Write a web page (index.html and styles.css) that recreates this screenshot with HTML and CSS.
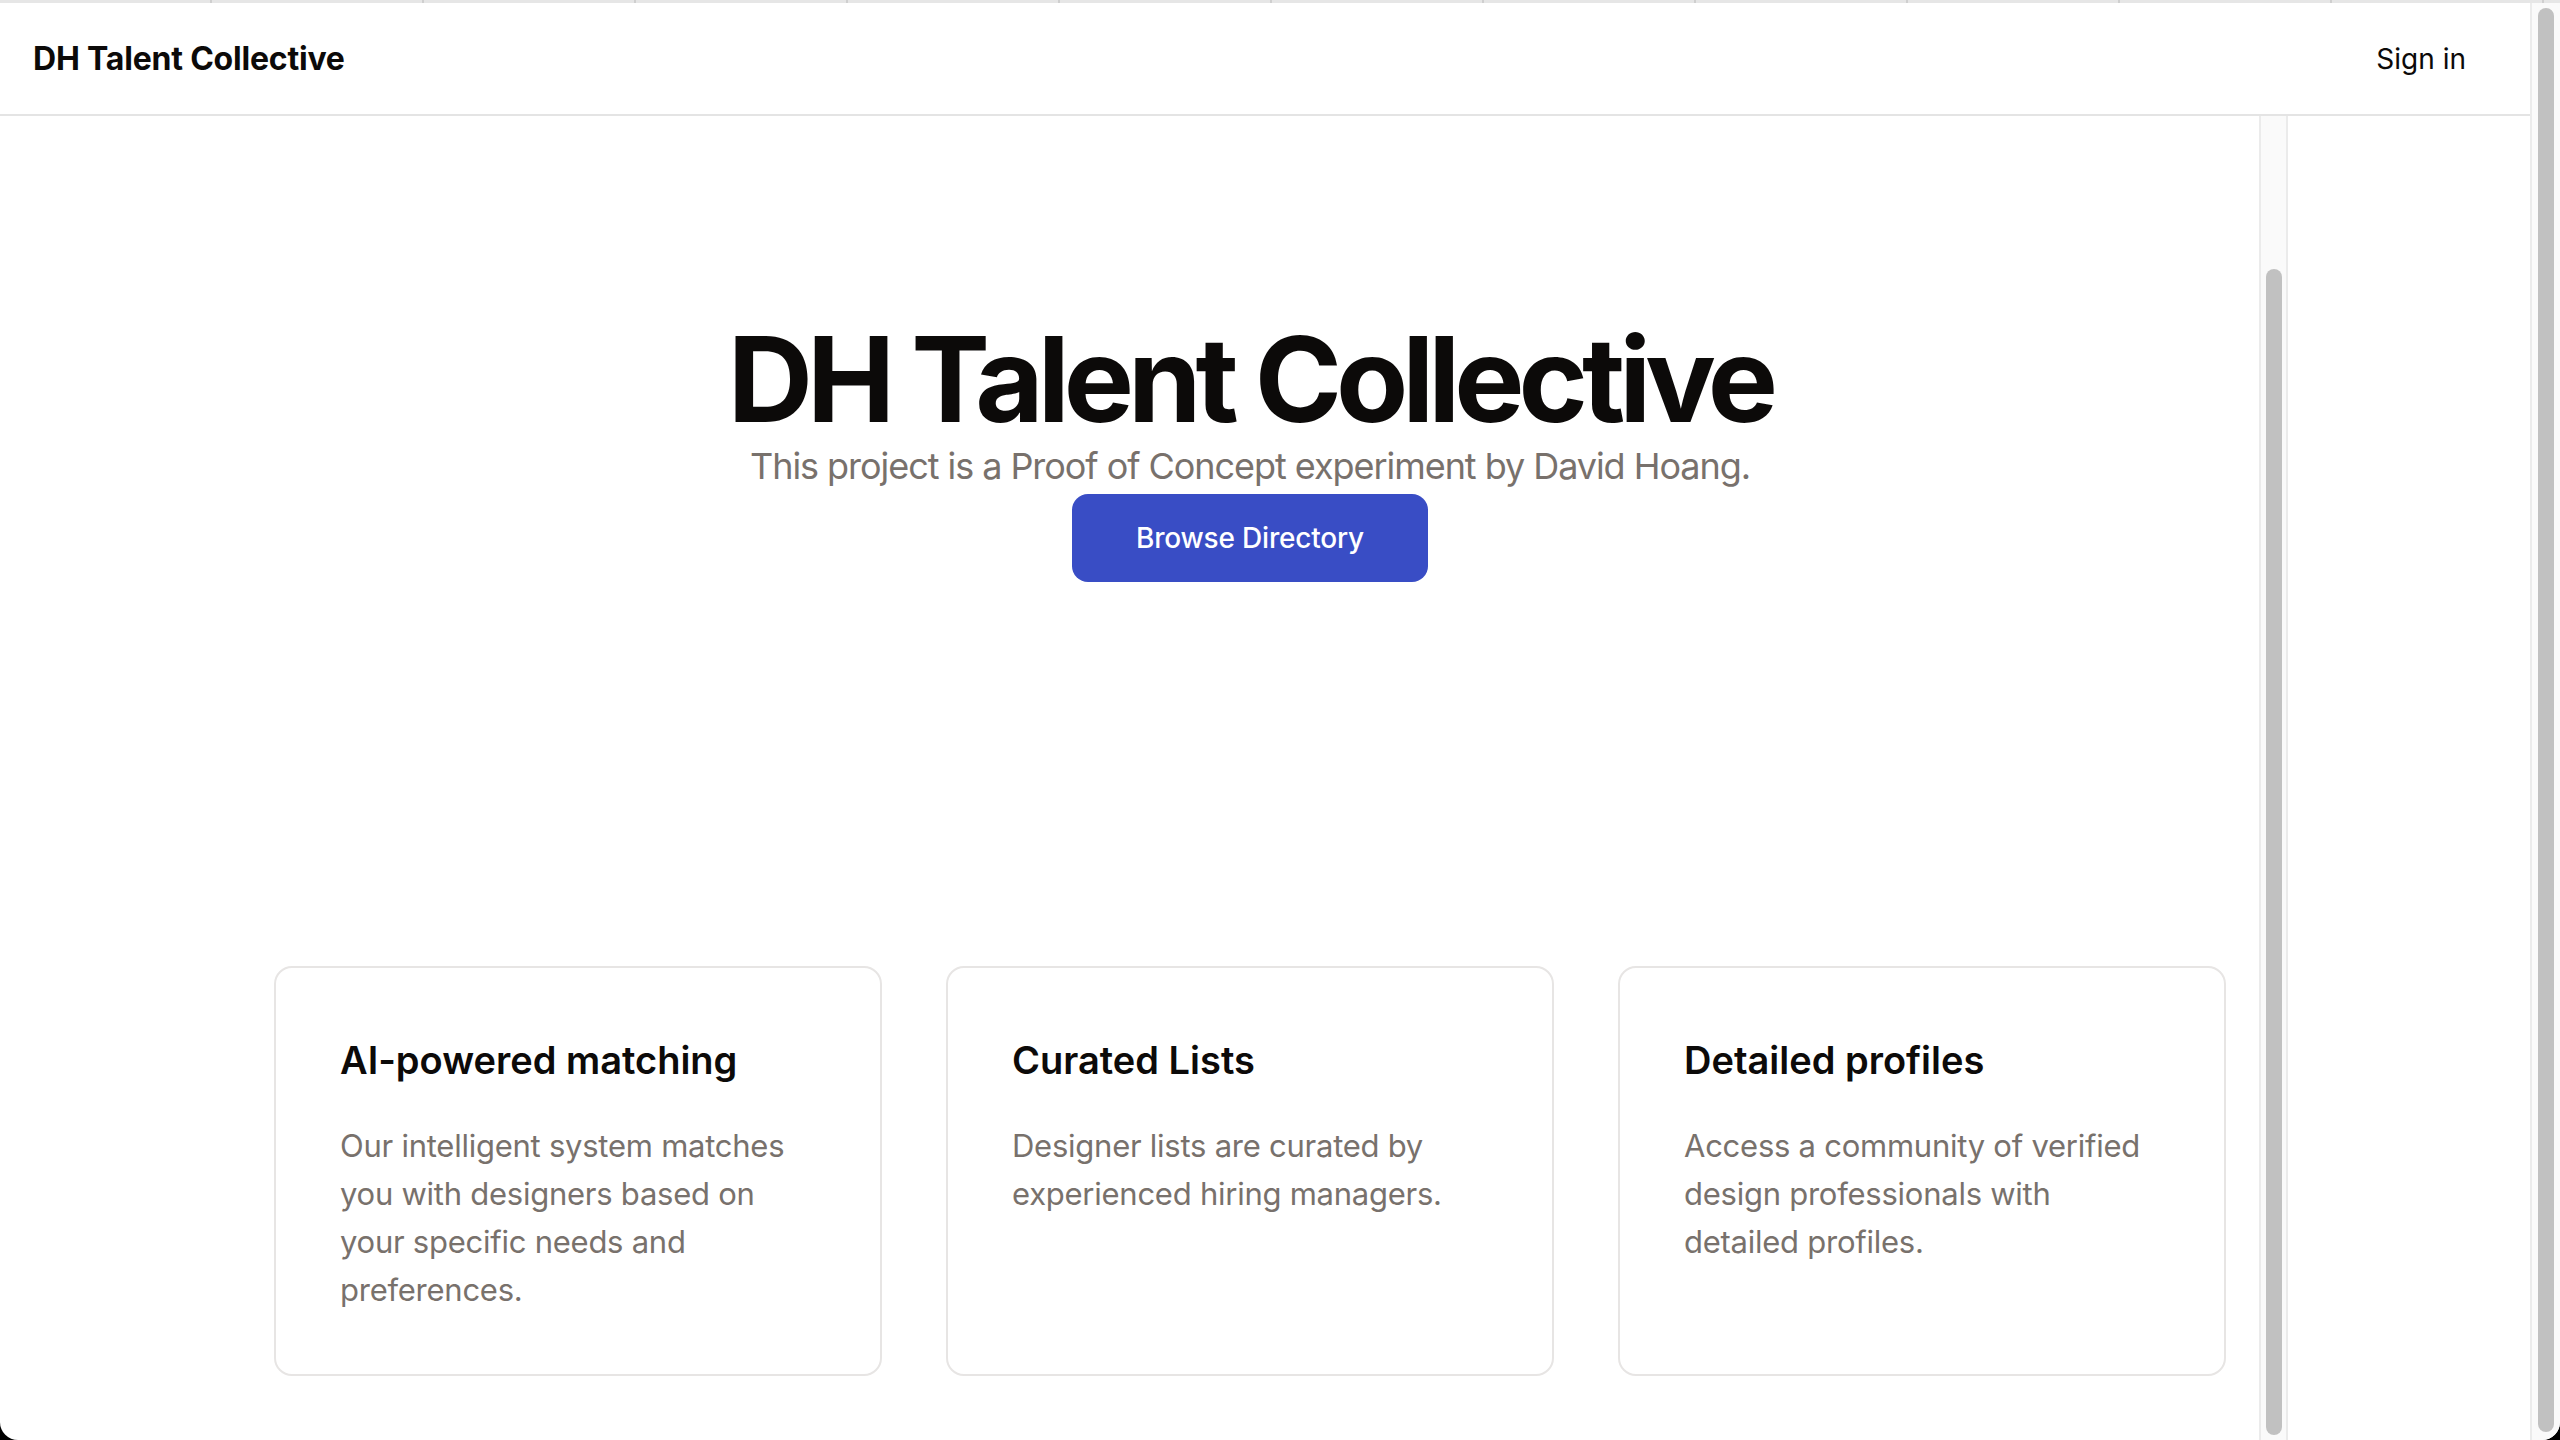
FILE: index.html
```html
<!DOCTYPE html>
<html lang="en">
<head>
<meta charset="utf-8">
<title>DH Talent Collective</title>
<link rel="stylesheet" href="styles.css">
</head>
<body>
<div class="window">
  <div class="tabstrip">
    <span></span><span></span><span></span><span></span><span></span><span></span>
    <span></span><span></span><span></span><span></span><span></span><span></span>
  </div>
  <div class="frame">
    <div class="page">
      <header class="topbar">
        <a class="brand" href="#">DH Talent Collective</a>
        <a class="signin" href="#">Sign in</a>
      </header>
      <div class="viewport">
        <main class="scroller">
          <section class="hero">
            <h1 class="hero-title">DH Talent Collective</h1>
            <p class="hero-sub">This project is a Proof of Concept experiment by David Hoang.</p>
            <a class="btn-primary" href="#">Browse Directory</a>
          </section>
          <section class="features">
            <article class="card">
              <h2 class="card-title">AI-powered matching</h2>
              <p class="card-text">Our intelligent system matches you with designers based on your specific needs and preferences.</p>
            </article>
            <article class="card">
              <h2 class="card-title">Curated Lists</h2>
              <p class="card-text">Designer lists are curated by experienced hiring managers.</p>
            </article>
            <article class="card">
              <h2 class="card-title">Detailed profiles</h2>
              <p class="card-text">Access a community of verified design professionals with detailed profiles.</p>
            </article>
          </section>
        </main>
        <div class="vscroll vscroll-inner"><div class="thumb thumb-inner"></div></div>
        <div class="aside"></div>
      </div>
    </div>
    <div class="vscroll vscroll-outer"><div class="thumb thumb-outer"></div></div>
  </div>
</div>
</body>
</html>
```

FILE: styles.css
```css
* { box-sizing: border-box; }

html, body {
  margin: 0;
  padding: 0;
  height: 100%;
  background: #000;
}

body {
  font-family: Inter, "Liberation Sans", sans-serif;
  color: #0c0a09;
  overflow: hidden;
}

a { text-decoration: none; color: inherit; }

.window {
  width: 2560px;
  height: 1440px;
  background: #fff;
  border-bottom-left-radius: 18px;
  border-bottom-right-radius: 18px;
  overflow: hidden;
  display: flex;
  flex-direction: column;
}

.tabstrip {
  height: 3px;
  display: flex;
  background: #e6e6e6;
  flex: none;
}
.tabstrip span {
  width: 212px;
  height: 100%;
  border-right: 2px solid #cfcfcf;
}

.frame {
  flex: 1;
  display: flex;
  min-height: 0;
}

.page {
  flex: 1;
  display: flex;
  flex-direction: column;
  min-width: 0;
}

.topbar {
  height: 113px;
  flex: none;
  display: flex;
  align-items: center;
  justify-content: space-between;
  padding: 0 64px 0 33px;
  border-bottom: 2px solid #e4e4e4;
}

.brand {
  font-size: 32px;
  font-weight: 700;
  letter-spacing: -0.2px;
  color: #0c0a09;
}

.signin {
  font-size: 28px;
  font-weight: 400;
  color: #0c0a09;
}

.viewport {
  flex: 1;
  display: flex;
  min-height: 0;
}

.scroller {
  width: 2259px;
  flex: none;
  padding-left: 241px;
  display: flex;
  flex-direction: column;
  align-items: center;
  overflow: hidden;
}

.hero {
  display: flex;
  flex-direction: column;
  align-items: center;
  padding-top: 204px;
}

.hero-title {
  margin: 0;
  font-size: 118px;
  line-height: 118px;
  font-weight: 700;
  letter-spacing: -6px;
  color: #0c0a09;
}

.hero-sub {
  margin: 0;
  font-size: 36px;
  line-height: 56px;
  color: #78716c;
  letter-spacing: -1.05px;
}

.btn-primary {
  display: inline-flex;
  align-items: center;
  justify-content: center;
  width: 356px;
  height: 88px;
  border-radius: 16px;
  background: #394dc5;
  color: #fff;
  font-size: 28px;
  font-weight: 500;
  letter-spacing: -0.2px;
}

.features {
  margin-top: 384px;
  display: grid;
  grid-template-columns: repeat(3, 608px);
  gap: 64px;
}

.card {
  border: 2px solid #e7e5e4;
  border-radius: 18px;
  padding: 64px;
  height: 410px;
}

.card-title {
  margin: 0;
  font-size: 38px;
  line-height: 56px;
  font-weight: 600;
  letter-spacing: 0;
  color: #0c0a09;
}

.card-text {
  margin: 34px 0 0;
  font-size: 31px;
  line-height: 48px;
  color: #78716c;
  letter-spacing: -0.25px;
}

.vscroll {
  flex: none;
  background: #fafafa;
  border-left: 2px solid #ebebeb;
  display: flex;
  justify-content: center;
}

.vscroll-inner {
  width: 29px;
  border-right: 2px solid #ebebeb;
  padding-top: 153px;
  padding-bottom: 5px;
}

.vscroll-outer {
  width: 30px;
  padding-top: 5px;
  padding-bottom: 8px;
}

.thumb {
  width: 16px;
  background: #c1c1c1;
  border-radius: 8px;
  flex: none;
  height: 100%;
}

.aside {
  flex: 1;
  background: #fff;
}
```
